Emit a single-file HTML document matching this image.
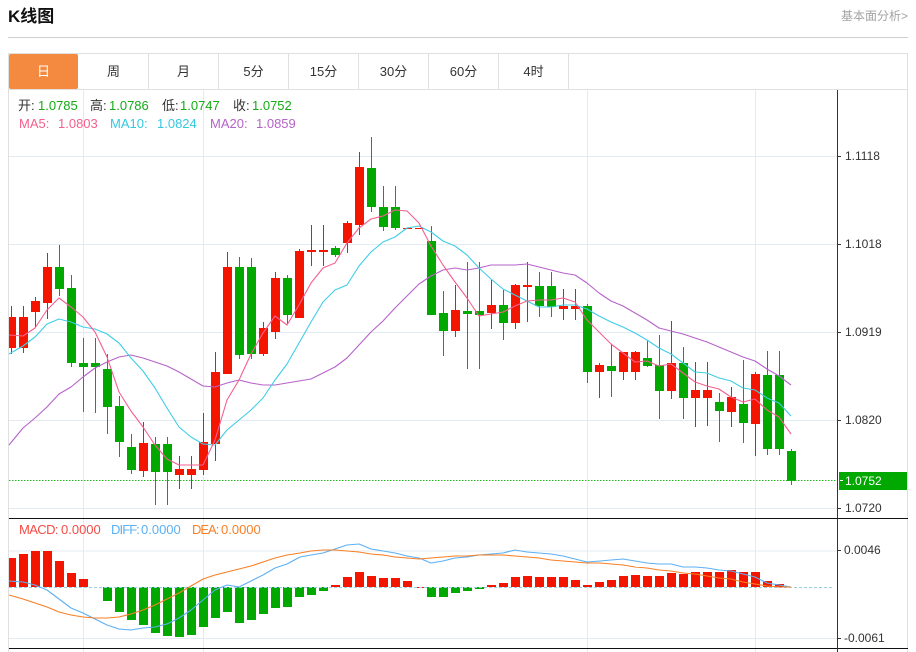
<!DOCTYPE html>
<html lang="zh">
<head>
<meta charset="utf-8">
<title>K线图</title>
<style>
html,body{margin:0;padding:0;background:#fff;}
body{width:916px;height:652px;position:relative;overflow:hidden;font-family:"Liberation Sans","Noto Sans CJK SC",sans-serif;}
.title{position:absolute;left:8px;top:5px;font-size:17px;line-height:24px;font-weight:bold;color:#111;}
.more{position:absolute;right:8px;top:8px;font-size:12px;line-height:16px;color:#a3a3a3;}
.rule{position:absolute;left:8px;top:37px;width:900px;height:1px;background:#cfcfcf;}
.tab{position:absolute;top:54px;height:35px;line-height:35px;text-align:center;font-size:13px;color:#333;width:69px;border-right:1px solid #e0e0e0;}
.tab.on{left:9px;background:#f48a3f;color:#fff;border-right:0;border-radius:2px;width:69px;}
.t{position:absolute;font-size:13px;line-height:16px;white-space:nowrap;}
svg{position:absolute;left:0;top:0;}
</style>
</head>
<body>
<svg width="916" height="652" viewBox="0 0 916 652">
<g shape-rendering="crispEdges" fill="none">
<path d="M8 53.5H908M8 89.5H908M8.5 53V652M907.5 53V652" stroke="#e0e0e0"/>
<path d="M9 156.5H837M9 244.5H837M9 332.5H837M9 420.5H837M9 508.5H837M9 551H837M9 638.5H837M83.5 90V652M203.5 90V652M587.5 90V652M755.5 90V652" stroke="#e2ebf1"/>
</g>
<g shape-rendering="crispEdges">
<path stroke="#f41501" fill="none" d="M11.5 306V354M23.5 306V353M35.5 297V327M47.5 253V319M143.5 422V477M179.5 456V489M191.5 456V489M203.5 413V475M215.5 352V461M227.5 252V374M263.5 322V356M275.5 272V339M299.5 249V318M311.5 225V266M323.5 225V266M347.5 221V253M359.5 152V235M455.5 285V337M491.5 280V329M515.5 284V329M527.5 262V322M563.5 289V320M575.5 289V320M599.5 363V398M623.5 352V380M635.5 351V380M671.5 321V399M695.5 362V427M707.5 362V426M731.5 387V427M755.5 372V456"/>
<path fill="#f41501" d="M9 317H16V348H9ZM19 317H28V348H19ZM31 301H40V312H31ZM43 267H52V303H43ZM139 443H148V471H139ZM175 469H184V475H175ZM187 469H196V475H187ZM199 442H208V470H199ZM211 372H220V444H211ZM223 267H232V374H223ZM259 328H268V354H259ZM271 278H280V332H271ZM295 251H304V318H295ZM307 250H316V252H307ZM319 250H328V252H319ZM343 223H352V243H343ZM355 167H364V225H355ZM403 228H412V229H403ZM415 228H424V229H415ZM451 310H460V331H451ZM487 305H496V313H487ZM511 285H520V323H511ZM523 285H532V287H523ZM559 306H568V309H559ZM571 306H580V309H571ZM595 365H604V372H595ZM619 352H628V372H619ZM631 352H640V372H631ZM667 363H676V391H667ZM691 390H700V398H691ZM703 390H712V398H703ZM727 397H736V412H727ZM751 374H760V424H751Z"/>
<path stroke="#00a800" fill="none" d="M59.5 245V296M71.5 275V367M83.5 338V412M95.5 338V413M107.5 354V434M119.5 396V457M131.5 434V474M155.5 437V505M167.5 437V505M239.5 257V359M251.5 258V359M287.5 275V324M335.5 246V257M371.5 137V212M383.5 186V231M395.5 186V230M431.5 226V315M443.5 291V356M467.5 262V369M479.5 262V369M503.5 290V340M539.5 272V317M551.5 272V317M587.5 304V383M611.5 344V397M647.5 341V367M659.5 335V419M683.5 347V419M719.5 393V442M743.5 360V443M767.5 351V455M779.5 351V455M791.5 449V485"/>
<path fill="#00a800" d="M55 267H64V289H55ZM67 288H76V363H67ZM79 363H88V367H79ZM91 363H100V367H91ZM103 369H112V407H103ZM115 406H124V442H115ZM127 447H136V470H127ZM151 444H160V472H151ZM163 444H172V472H163ZM235 267H244V355H235ZM247 267H256V354H247ZM283 278H292V315H283ZM331 248H340V255H331ZM367 168H376V207H367ZM379 207H388V227H379ZM391 207H400V228H391ZM427 241H436V315H427ZM439 313H448V331H439ZM463 311H472V314H463ZM475 311H484V315H475ZM499 305H508V323H499ZM535 286H544V306H535ZM547 286H556V307H547ZM583 306H592V372H583ZM607 366H616V371H607ZM643 358H652V366H643ZM655 365H664V391H655ZM679 363H688V398H679ZM715 402H724V411H715ZM739 404H748V423H739ZM763 375H772V449H763ZM775 375H784V449H775ZM787 451H796V481H787Z"/>
</g>
<g fill="none" stroke-width="1.1" stroke-linejoin="round">
<polyline stroke="#b663c9" points="9,445 23,428 35,418 47,407 59,394 71,387 83,377 95,368 107,362 119,357 131,355 143,358 155,362 167,366 179,372 191,379 203,386 215,387 227,383 239,380 251,383 263,385 275,385 287,383 299,381 311,379 323,373 335,367 347,358 359,345 371,332 383,321 395,308 407,296 419,284 431,276 443,270 455,268 467,270 479,268 491,265 503,265 515,265 527,264 539,267 551,270 563,273 575,275 587,283 599,293 611,301 623,306 635,313 647,320 659,328 671,331 683,334 695,338 707,342 719,347 731,352 743,357 755,361 767,369 779,376 791,385"/>
<polyline stroke="#3fcde6" points="9,354 23,346 35,337 47,324 59,319 71,322 83,327 95,329 107,334 119,343 131,358 143,371 155,388 167,408 179,427 191,437 203,444 215,445 227,430 239,420 251,410 263,398 275,380 287,364 299,343 311,322 323,302 335,290 347,285 359,266 371,252 383,242 395,237 407,228 419,226 431,232 443,241 455,246 467,255 479,268 491,279 503,289 515,295 527,301 539,307 551,307 563,305 575,305 587,309 599,316 611,322 623,327 635,333 647,340 659,348 671,354 683,363 695,372 707,373 719,378 731,381 743,388 755,390 767,398 779,403 791,416"/>
<polyline stroke="#f4608f" points="9,335 23,336 35,328 47,310 59,298 71,307 83,317 95,332 107,357 119,392 131,411 143,427 155,445 167,459 179,465 191,465 203,465 215,440 227,400 239,380 251,354 263,333 275,316 287,325 299,305 311,283 323,268 335,263 347,243 359,228 371,219 383,216 395,210 407,211 419,223 431,246 443,265 455,282 467,298 479,316 491,314 503,312 515,306 527,301 539,300 551,300 563,298 575,302 587,320 599,332 611,344 623,353 635,362 647,361 659,366 671,364 683,373 695,382 707,386 719,389 731,397 743,402 755,399 767,410 779,417 791,434"/>
</g>
<path d="M9 480.5H837" stroke="#1fb81f" stroke-width="1" stroke-dasharray="1.5 1.5" shape-rendering="crispEdges" fill="none"/>
<g shape-rendering="crispEdges">
<path fill="#f41501" d="M9 558H16V587H9ZM19 554H28V587H19ZM31 551H40V587H31ZM43 551H52V587H43ZM55 561H64V587H55ZM67 573H76V587H67ZM79 579H88V587H79ZM331 585H340V587H331ZM343 577H352V587H343ZM355 572H364V587H355ZM367 576H376V587H367ZM379 578H388V587H379ZM391 578H400V587H391ZM403 581H412V587H403ZM415 587H424V588H415ZM487 585H496V587H487ZM499 583H508V587H499ZM511 577H520V587H511ZM523 576H532V587H523ZM535 577H544V587H535ZM547 577H556V587H547ZM559 577H568V587H559ZM571 580H580V587H571ZM583 585H592V587H583ZM595 582H604V587H595ZM607 580H616V587H607ZM619 576H628V587H619ZM631 575H640V587H631ZM643 576H652V587H643ZM655 576H664V587H655ZM667 573H676V587H667ZM679 574H688V587H679ZM691 572H700V587H691ZM703 572H712V587H703ZM715 572H724V587H715ZM727 570H736V587H727ZM739 572H748V587H739ZM751 572H760V587H751ZM763 581H772V587H763ZM775 584H784V587H775Z"/>
<path fill="#00a800" d="M103 587H112V601H103ZM115 587H124V612H115ZM127 587H136V620H127ZM139 587H148V625H139ZM151 587H160V633H151ZM163 587H172V636H163ZM175 587H184V637H175ZM187 587H196V635H187ZM199 587H208V627H199ZM211 587H220V618H211ZM223 587H232V612H223ZM235 587H244V623H235ZM247 587H256V620H247ZM259 587H268V614H259ZM271 587H280V608H271ZM283 587H292V607H283ZM295 587H304V597H295ZM307 587H316V595H307ZM319 587H328V591H319ZM427 587H436V597H427ZM439 587H448V597H439ZM451 587H460V593H451ZM463 587H472V591H463ZM475 587H484V589H475Z"/>
<path d="M9 587.5H834" stroke="#9ccfe0" stroke-dasharray="3 2" fill="none"/>
</g>
<g fill="none" stroke-width="1.1" stroke-linejoin="round">
<polyline stroke="#5cb0f5" points="9,581 23,582 35,585 47,590 59,599 71,608 83,613 95,619 107,625 119,629 131,630 143,628 155,627 167,624 179,618 191,610 203,600 215,590 227,585 239,587 251,581 263,575 275,568 287,564 300,557 311,555 323,553 335,549 347,545 359,544 371,549 383,551 395,553 407,556 419,558 431,563 443,561 455,558 467,557 479,555 491,554 503,553 515,550 527,552 539,553 551,554 563,556 575,559 587,562 600,561 611,560 623,559 635,561 647,563 659,564 671,564 683,567 695,567 707,568 719,570 731,571 743,574 755,577 767,583 779,585 791,587"/>
<polyline stroke="#f97f25" points="9,595 23,599 35,603 47,607 59,612 71,615 83,617 95,618 107,618 119,617 131,614 143,610 155,605 167,599 179,593 191,586 203,579 215,575 227,572 239,569 251,566 263,562 275,558 287,555 300,553 311,551 323,550 335,550 347,551 359,552 371,554 383,555 395,557 407,558 419,559 431,558 443,557 455,556 467,556 479,555 491,555 503,555 515,556 527,557 539,558 551,560 563,561 575,562 587,563 600,563 611,564 623,565 635,567 647,568 659,570 671,571 683,573 695,574 707,576 719,578 731,579 743,582 755,584 767,586 779,587 791,587"/>
</g>
<g shape-rendering="crispEdges" fill="none">
<path d="M9 518.5H908M9 648.5H908" stroke="#111"/>
<path d="M837.5 90V652M837 156.5H841M837 244.5H841M837 332.5H841M837 420.5H841M837 508.5H841M837 550.5H841M837 638.5H841" stroke="#333"/>
<rect x="839" y="472" width="68" height="18" fill="#00a800"/>
<path d="M840 480.5H843" stroke="#fff"/>
</g>
</svg>
<div class="title">K线图</div>
<div class="more">基本面分析&gt;</div>
<div class="rule"></div>
<div class="tab on">日</div>
<div class="tab" style="left:79px">周</div>
<div class="tab" style="left:149px">月</div>
<div class="tab" style="left:219px">5分</div>
<div class="tab" style="left:289px">15分</div>
<div class="tab" style="left:359px">30分</div>
<div class="tab" style="left:429px">60分</div>
<div class="tab" style="left:499px">4时</div>

<div class="t" style="left:18px;top:98px;color:#333">开:</div><div class="t" style="left:38px;top:98px;color:#15ab15">1.0785</div>
<div class="t" style="left:90px;top:98px;color:#333">高:</div><div class="t" style="left:109px;top:98px;color:#15ab15">1.0786</div>
<div class="t" style="left:162px;top:98px;color:#333">低:</div><div class="t" style="left:180px;top:98px;color:#15ab15">1.0747</div>
<div class="t" style="left:233px;top:98px;color:#333">收:</div><div class="t" style="left:252px;top:98px;color:#15ab15">1.0752</div>
<div class="t" style="left:19px;top:116px;color:#f4608f">MA5:</div><div class="t" style="left:58px;top:116px;color:#f4608f">1.0803</div>
<div class="t" style="left:110px;top:116px;color:#35c8e2">MA10:</div><div class="t" style="left:157px;top:116px;color:#35c8e2">1.0824</div>
<div class="t" style="left:210px;top:116px;color:#b663c9">MA20:</div><div class="t" style="left:256px;top:116px;color:#b663c9">1.0859</div>

<div class="t" style="left:19px;top:522px;color:#f44b45;letter-spacing:-.6px">MACD:</div><div class="t" style="left:61px;top:522px;color:#f44b45">0.0000</div>
<div class="t" style="left:111px;top:522px;color:#5cb0f5;letter-spacing:-.9px">DIFF:</div><div class="t" style="left:141px;top:522px;color:#5cb0f5">0.0000</div>
<div class="t" style="left:192px;top:522px;color:#f97f25;letter-spacing:-1px">DEA:</div><div class="t" style="left:221px;top:522px;color:#f97f25">0.0000</div>

<div class="t" style="left:845px;top:148px;font-size:12px;color:#333">1.1118</div>
<div class="t" style="left:845px;top:236px;font-size:12px;color:#333">1.1018</div>
<div class="t" style="left:845px;top:324px;font-size:12px;color:#333">1.0919</div>
<div class="t" style="left:845px;top:412px;font-size:12px;color:#333">1.0820</div>
<div class="t" style="left:845px;top:473px;font-size:12px;color:#fff">1.0752</div>
<div class="t" style="left:845px;top:500px;font-size:12px;color:#333">1.0720</div>
<div class="t" style="left:844px;top:542px;font-size:12px;color:#333">0.0046</div>
<div class="t" style="left:844px;top:630px;font-size:12px;color:#333">-0.0061</div>
</body>
</html>
